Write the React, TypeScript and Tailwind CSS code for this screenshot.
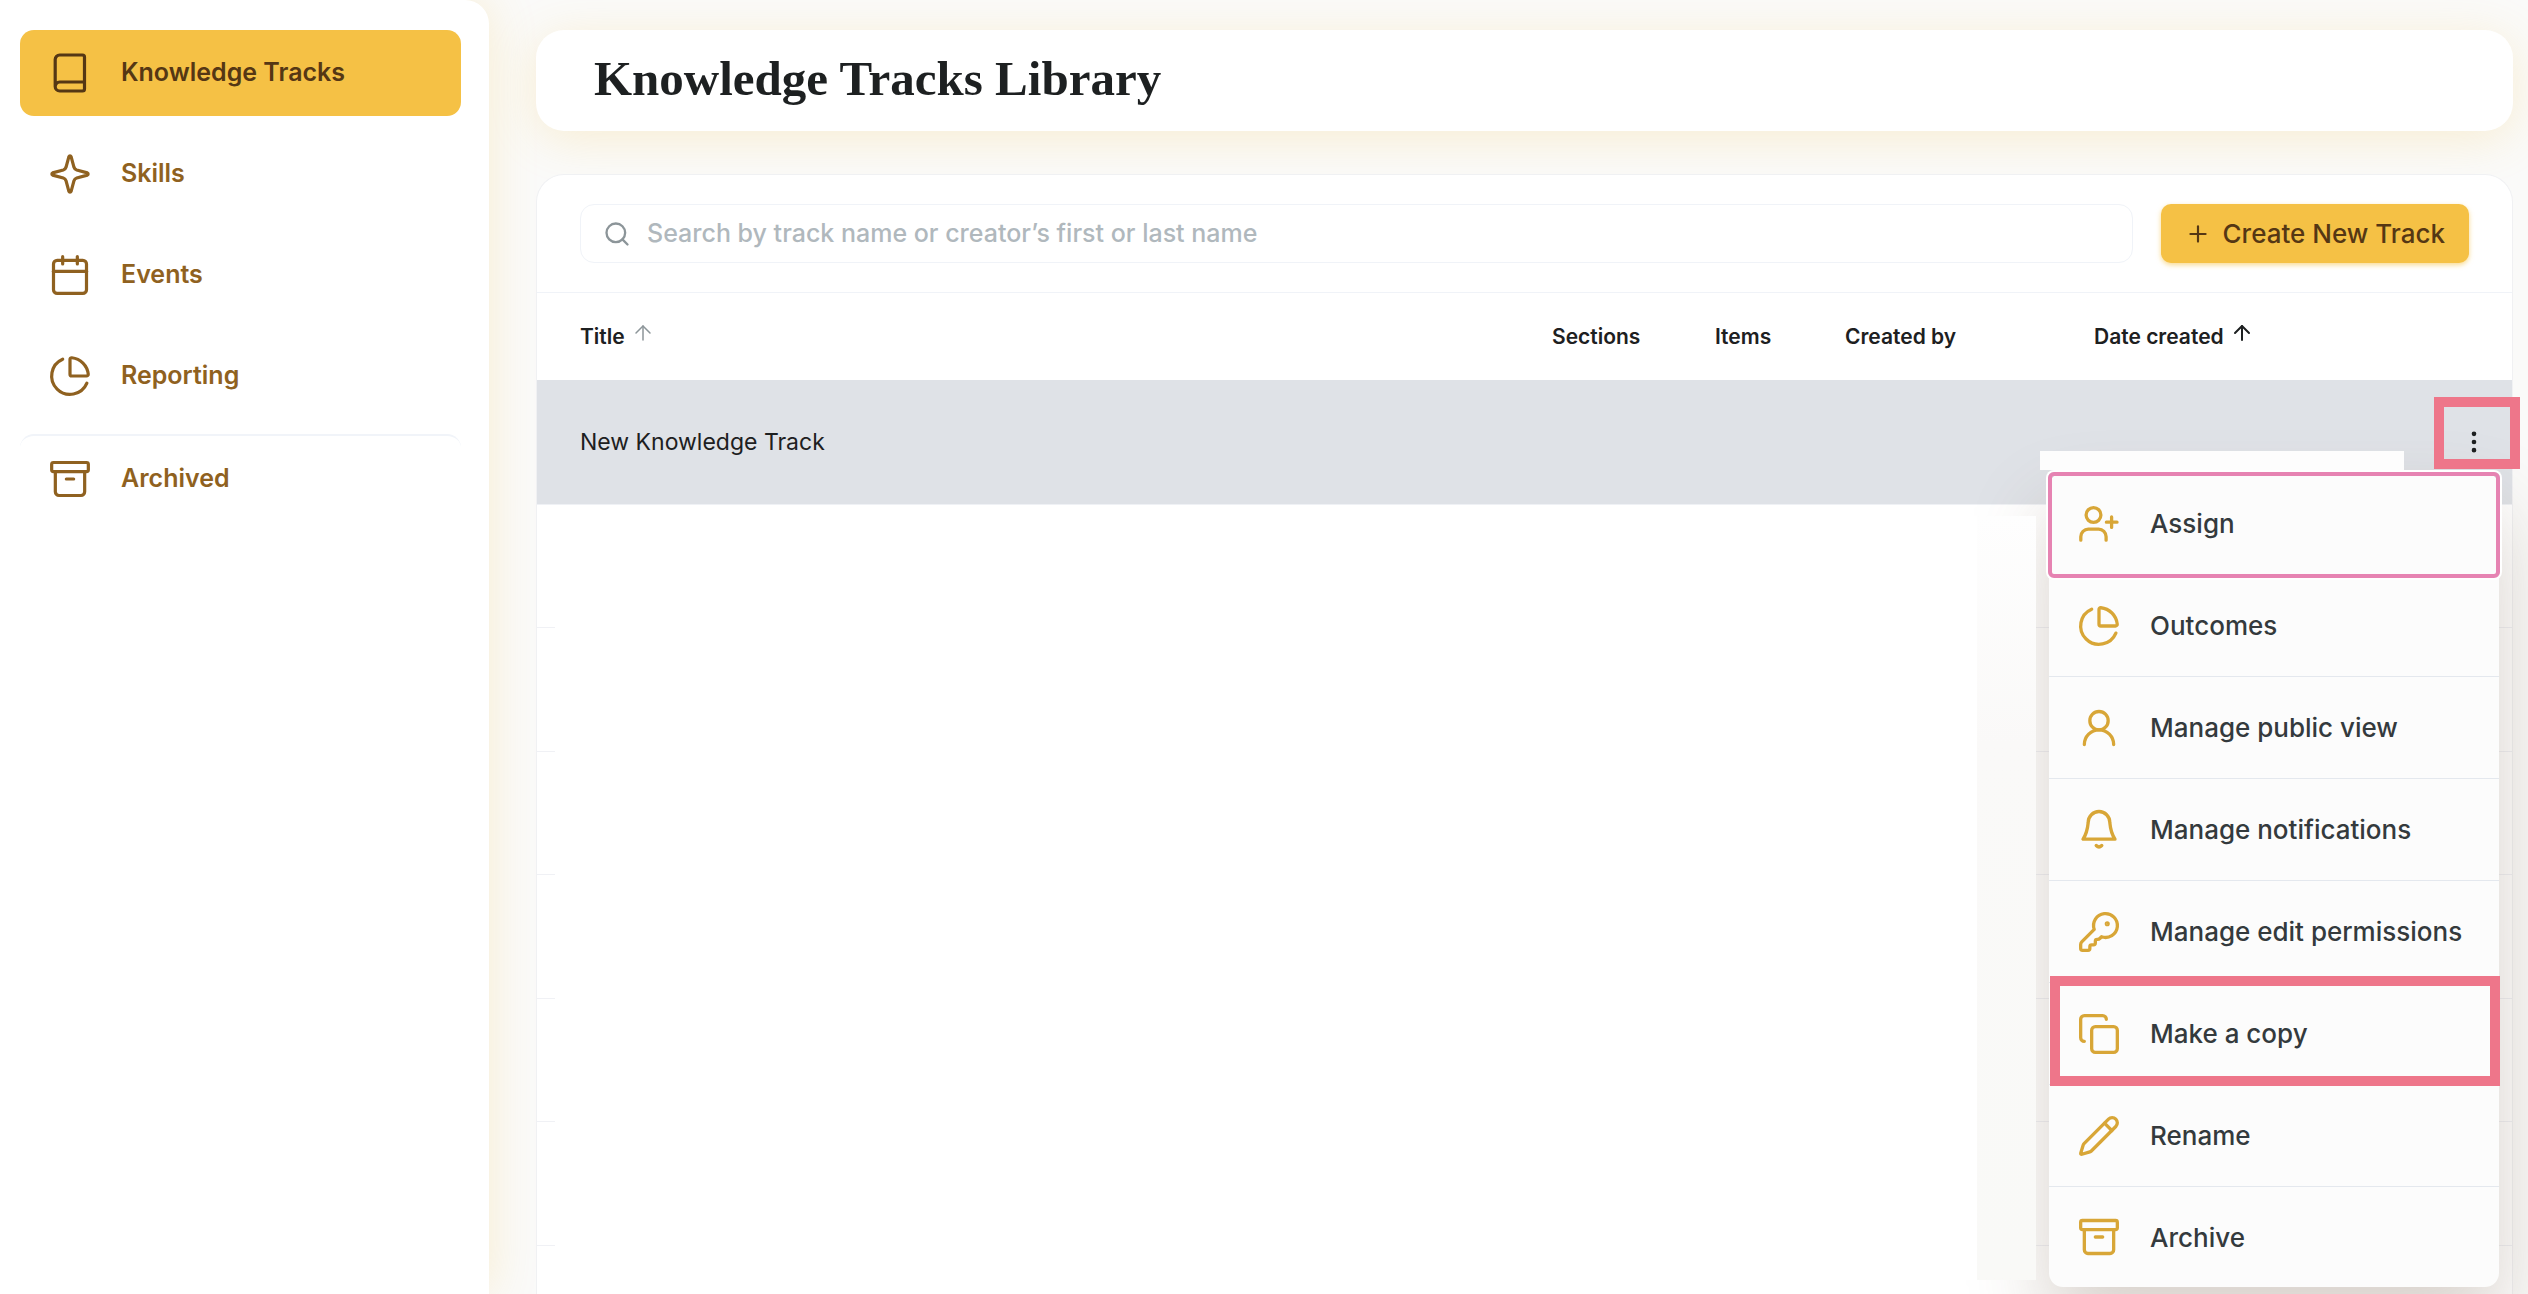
import {
  Archive,
  ArrowUp,
  Calendar,
  Copy,
  EllipsisVertical,
  KeyRound,
  Pencil,
  PieChart,
  Plus,
  Search,
  UserRound,
} from "lucide-react";

type IconProps = { className?: string; strokeWidth?: number };

// icons that the package draws differently
function BookIcon({ className }: IconProps) {
  return (
    <svg viewBox="-2 -2 44 44" fill="none" stroke="currentColor" strokeWidth={3.2} strokeLinecap="round" strokeLinejoin="round" className={className}>
      <path d="M5.200 33.500V6.500a4.500 4.500 0 0 1 4.500-4.500H32.500a2 2 0 0 1 2 2V36a2 2 0 0 1-2 2H9.700A4.500 4.500 0 0 1 5.200 33.500a4.500 4.500 0 0 1 4.500-4.500H34.500" />
    </svg>
  );
}

function SparkIcon({ className }: IconProps) {
  return (
    <svg viewBox="-2 -2 44 44" fill="none" stroke="currentColor" strokeWidth={3.2} strokeLinecap="round" strokeLinejoin="round" className={className}>
      <path d="M18.900 2.600a1.200 1.200 0 0 1 2.200 0l2.900 10.700a4 4 0 0 0 2.700 2.700l10.700 2.900a1.200 1.200 0 0 1 0 2.200l-10.700 2.900a4 4 0 0 0-2.700 2.700l-2.900 10.700a1.200 1.200 0 0 1-2.200 0l-2.900-10.700a4 4 0 0 0-2.700-2.700L2.600 21.100a1.200 1.200 0 0 1 0-2.200l10.700-2.900a4 4 0 0 0 2.700-2.700z" />
    </svg>
  );
}

function AssignIcon({ className }: IconProps) {
  return (
    <svg viewBox="-2 -2 44 44" fill="none" stroke="currentColor" strokeWidth={3.3} strokeLinecap="round" strokeLinejoin="round" className={className}>
      <circle cx="14.500" cy="11" r="7.400" />
      <path d="M1.800 36.200v-3.500A7.500 7.500 0 0 1 9.300 25.200h10.300a7.500 7.500 0 0 1 7.500 7.500v3.500M27.400 18.200h10.600M32.600 13v10.400" />
    </svg>
  );
}

function BellIcon({ className }: IconProps) {
  return (
    <svg viewBox="-22 -22 44 44" fill="none" stroke="currentColor" strokeWidth={3.3} strokeLinecap="round" strokeLinejoin="round" className={className}>
      <path d="M-16 9.200H16C12.500 4 11.500 0 10.800-7.500A10.800 11 0 0 0-10.800-7.500C-11.500 0-12.500 4-16 9.200ZM-2.800 15.500q2.800 2.800 5.600 0" />
    </svg>
  );
}

const navItems = [
  { label: "Knowledge Tracks", icon: BookIcon, active: true },
  { label: "Skills", icon: SparkIcon },
  { label: "Events", icon: Calendar },
  { label: "Reporting", icon: PieChart },
];

const menuItems = [
  { label: "Assign", icon: AssignIcon, focused: true },
  { label: "Outcomes", icon: PieChart },
  { label: "Manage public view", icon: UserRound },
  { label: "Manage notifications", icon: BellIcon },
  { label: "Manage edit permissions", icon: KeyRound },
  { label: "Make a copy", icon: Copy, marked: true },
  { label: "Rename", icon: Pencil },
  { label: "Archive", icon: Archive },
];

const emptyRows = [1, 2, 3, 4, 5, 6];

function Sidebar() {
  return (
    <nav className="w-[489px] shrink-0 rounded-tr-3xl bg-white pt-[30px] pr-7 pl-5 shadow-[0_0_48px_rgba(245,190,60,0.22)]">
      <ul className="flex flex-col gap-[15px]">
        {navItems.map(({ label, icon: Icon, active }) => (
          <li key={label}>
            <a
              href="#"
              className={
                active
                  ? "flex h-[86px] items-center gap-[29px] rounded-[14px] bg-[#f5c145] pl-7 text-[25px] font-semibold text-[#553714]"
                  : "flex h-[86px] items-center gap-[29px] rounded-[14px] pl-7 text-[25px] font-semibold text-[#8f6120]"
              }
            >
              <Icon className="size-11" strokeWidth={1.75} />
              {label}
            </a>
          </li>
        ))}
        <li>
          <a
            href="#"
            className="flex h-[88px] items-center gap-[29px] rounded-[14px] border-t-2 border-[#f1f4f9] pl-7 text-[25px] font-semibold text-[#8f6120]"
          >
            <Archive className="size-11" strokeWidth={1.75} />
            Archived
          </a>
        </li>
      </ul>
    </nav>
  );
}

function TrackMenu() {
  return (
    <div className="absolute top-[180px] right-[13px] w-[450px] rounded-[14px] bg-[#fcfcfc] shadow-[0_40px_80px_rgba(100,75,50,0.26)]">
      <ul>
        {menuItems.map(({ label, icon: Icon, focused, marked }) => (
          <li key={label} className="relative h-[102px] border-b border-[#e4e8ee] last:h-[100px] last:border-b-0">
            <button className="flex h-full w-full items-center gap-[29px] pl-7 text-left text-[26px] font-medium text-[#343a3d]">
              <Icon className="size-11 text-[#d8a637]" strokeWidth={1.8} />
              {label}
            </button>
            {focused && (
              <span className="pointer-events-none absolute -inset-x-px -top-px -bottom-1 z-10 rounded-md border-4 border-[#e683b2] ring-2 ring-white" />
            )}
            {marked && (
              <span className="pointer-events-none absolute -top-[7px] -right-px -bottom-0.5 left-px z-10 border-10 border-[#ee768a]" />
            )}
          </li>
        ))}
      </ul>
    </div>
  );
}

export default function App() {
  return (
    <div className="flex h-screen overflow-hidden bg-[#fafaf9] font-['Inter',sans-serif] text-[#1d2021]">
      <Sidebar />

      <main className="flex min-w-0 flex-1 flex-col gap-[43px] pt-[30px] pr-[15px] pl-[47px]">
        <header className="flex h-[101px] shrink-0 items-center rounded-[28px] bg-white pb-1 pl-[58px] shadow-[0_8px_48px_rgba(245,190,60,0.2)]">
          <h1 className="font-['Liberation_Serif',serif] text-[49px] leading-none font-bold">Knowledge Tracks Library</h1>
        </header>

        <section className="min-h-0 flex-1 rounded-t-[28px] border border-b-0 border-[#f0f1f3] bg-white">
          <div className="flex items-center gap-7 border-b border-[#f0f3f8] px-[43px] py-[29px]">
            <label className="flex h-[59px] flex-1 items-center gap-4 rounded-[14px] border border-[#f0f3f8] pl-[22px]">
              <Search className="size-7 text-[#8c9599]" />
              <input
                type="text"
                aria-label="Search tracks"
                placeholder="Search by track name or creator’s first or last name"
                className="flex-1 text-[25px] font-medium outline-none placeholder:text-[#b0b8bd]"
              />
            </label>
            <button className="flex h-[59px] items-center gap-3 rounded-[10px] bg-[#f5c145] px-6 text-[26px] font-medium text-[#553714] shadow-[0_2px_5px_rgba(245,193,69,0.6)]">
              <Plus className="size-[26px]" strokeWidth={2} />
              Create New Track
            </button>
          </div>

          <div className="relative">
            <table className="w-full table-fixed border-collapse text-left">
              <thead>
                <tr className="h-[87px] text-[21px] leading-8">
                  <th className="pl-[43px] font-semibold">
                    <span className="flex items-start gap-1.5">
                      Title <ArrowUp className="size-6 text-[#8c9599]" strokeWidth={1.5} />
                    </span>
                  </th>
                  <th className="w-[163px] font-semibold">Sections</th>
                  <th className="w-[130px] font-semibold">Items</th>
                  <th className="w-[249px] font-semibold">Created by</th>
                  <th className="w-[320px] font-semibold">
                    <span className="flex items-start gap-1.5">
                      Date created <ArrowUp className="size-6" />
                    </span>
                  </th>
                  <th className="w-[98px]" aria-label="Actions" />
                </tr>
              </thead>
              <tbody>
                <tr className="h-[124px] border-b border-[#eff1f5] bg-[#dfe2e7]">
                  <td className="pl-[43px] text-[23px]">New Knowledge Track</td>
                  <td colSpan={4} />
                  <td className="relative">
                    <button aria-label="Track actions" className="ml-[46px] block">
                      <EllipsisVertical className="size-7" />
                    </button>
                    <span className="pointer-events-none absolute top-[17px] -right-2 z-10 h-[72px] w-[86px] border-10 border-[#ee768a]" />
                  </td>
                </tr>
                {emptyRows.map((row) => (
                  <tr key={row} className="border-b border-[#f0f1f5] even:h-[123px] odd:h-[124px]">
                    <td colSpan={6} />
                  </tr>
                ))}
              </tbody>
            </table>

            <TrackMenu />

            {/* blanked-out cells */}
            <div className="absolute top-[223px] right-[535px] left-[18px] h-[764px] bg-white" />
            <div className="absolute top-[223px] right-[476px] h-[764px] w-[59px] bg-linear-to-b from-[#fefefe] via-[#faf9f8] via-30% to-[#f9f9f7]" />
            <div className="absolute top-[158px] right-[108px] h-[19px] w-[364px] bg-[#fdfdfd]" />
          </div>
        </section>
      </main>
    </div>
  );
}
